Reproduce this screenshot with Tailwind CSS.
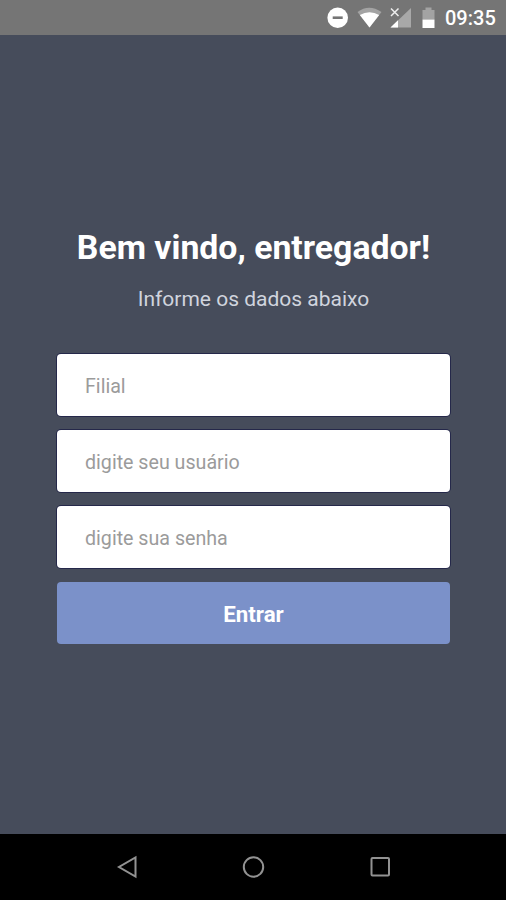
<!DOCTYPE html>
<html lang="pt-BR">
<head>
<meta charset="utf-8">
<title>Entrar</title>
<script src="https://cdn.jsdelivr.net/npm/@tailwindcss/browser@4"></script>
</head>
<body class="flex h-[900px] w-[506px] flex-col overflow-hidden bg-[#464c5b] font-['Roboto',sans-serif]">
  <header class="flex h-[34.5px] shrink-0 items-center justify-end bg-[#757575] pr-[10px]">
    <svg class="h-[34px] w-[120px]" viewBox="0 0 120 34" fill="none">
      <circle cx="12.7" cy="17.7" r="10.3" fill="#fff"/>
      <path d="M7.700 17.700h10" stroke="#757575" stroke-width="2.600"/>
      <path d="M32.500 12Q44 3.500 56.500 12L44.500 27.500Z" fill="#a3a3a3"/>
      <path d="M34.800 15Q44.500 9.500 54.200 15L44.500 27.500Z" fill="#fff"/>
      <path d="M86 8V27.500H65.500Z" fill="#a8a8a8"/>
      <path d="M73 20.300V27.500H65.500Z" fill="#fff"/>
      <path d="M66 8.500l7.500 7.500m0-7.500l-7.500 7.500" stroke="#eee" stroke-width="1.500"/>
      <path d="M97.500 10h3V7.500h6V10h3V19.500h-12Z" fill="#a3a3a3"/>
      <path d="M97.500 19.500h12v8.500h-12Z" fill="#fff"/>
    </svg>
    <span class="w-[51px] whitespace-nowrap pt-[2px] text-[20px] leading-[34px] font-medium text-white">09:35</span>
  </header>
  <main class="flex grow flex-col items-center pl-[1px]">
    <h1 class="mt-[193.5px] whitespace-nowrap text-[33.800px] leading-[40px] font-bold text-white">Bem vindo, entregador!</h1>
    <p class="mt-[17px] whitespace-nowrap text-[21px] leading-[28px] text-[#d0d4de]">Informe os dados abaixo</p>
    <form class="mt-[41px] flex w-[393px] flex-col gap-[14px]">
      <input class="h-[62px] rounded-[4px] bg-white px-[28px] pt-[2px] text-[19.650px] shadow-[0_0_0_1px_#25284a] outline-none placeholder:text-[#9b9b9b]" placeholder="Filial">
      <input class="h-[62px] rounded-[4px] bg-white px-[28px] pt-[2px] text-[19.650px] shadow-[0_0_0_1px_#25284a] outline-none placeholder:text-[#9b9b9b]" placeholder="digite seu usuário">
      <input class="h-[62px] rounded-[4px] bg-white px-[28px] pt-[2px] text-[19.650px] shadow-[0_0_0_1px_#25284a] outline-none placeholder:text-[#9b9b9b]" placeholder="digite sua senha">
      <button type="button" class="h-[62px] rounded-[4px] bg-[#7b91c9] pt-[3px] text-[22.300px] font-bold text-white">Entrar</button>
    </form>
  </main>
  <nav class="flex h-[66.5px] shrink-0 items-center justify-center gap-[102.500px] bg-black">
    <svg class="size-6" viewBox="0 0 24 24" fill="none" stroke="#929292" stroke-width="2"><path d="M20.500 2.500V21.500L4 12Z"/></svg>
    <svg class="size-6" viewBox="0 0 24 24" fill="none" stroke="#929292" stroke-width="2"><circle cx="12.500" cy="12" r="9.700"/></svg>
    <svg class="size-6" viewBox="0 0 24 24" fill="none" stroke="#929292" stroke-width="2"><rect x="3.500" y="3" width="17.500" height="17.500" rx="1"/></svg>
  </nav>
</body>
</html>
